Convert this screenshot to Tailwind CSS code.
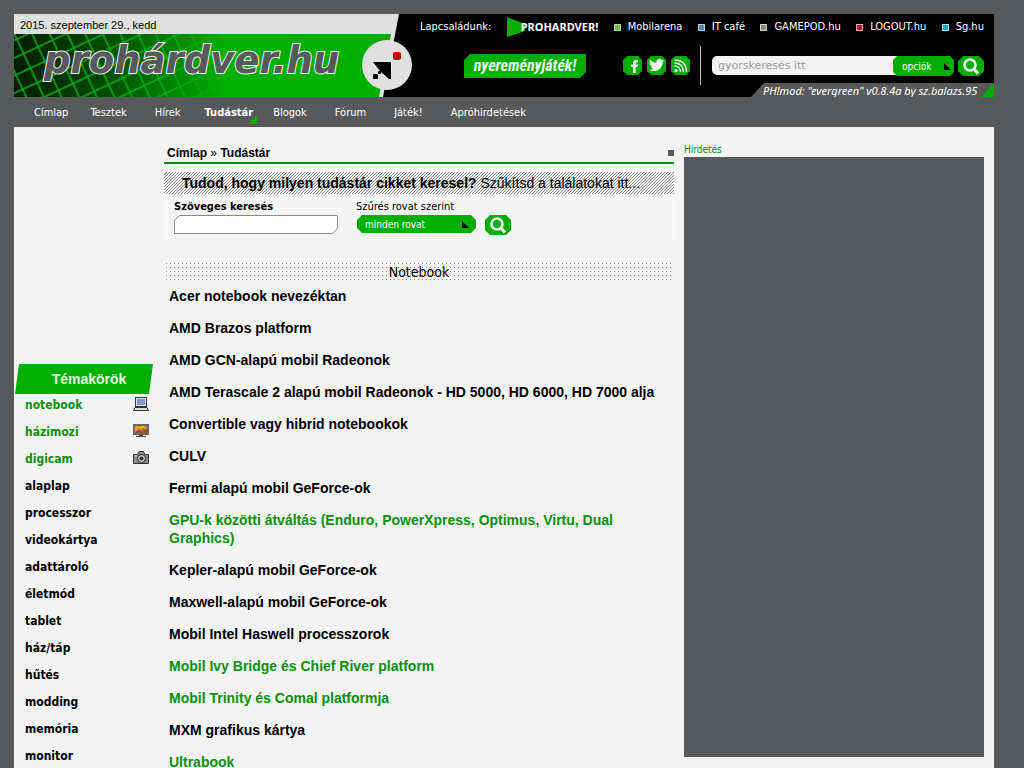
<!DOCTYPE html>
<html lang="hu">
<head>
<meta charset="utf-8">
<title>PROHARDVER! Tudástár</title>
<script src="https://cdn.jsdelivr.net/npm/@tailwindcss/browser@4"></script>
</head>
<body class="bg-[#58595b] pl-[14px] pr-[30px] pt-[14px] font-['DejaVu_Sans_Condensed','DejaVu_Sans',sans-serif] text-[11px] text-black">
<header class="relative flex h-[83px] bg-black text-white">
  <svg class="absolute left-0 top-0" width="400" height="83" viewBox="0 0 400 83" aria-hidden="true">
    <defs>
      <linearGradient id="g" x1="0" x2="1"><stop offset="0" stop-color="#001c00"/><stop offset=".25" stop-color="#004d00"/><stop offset=".56" stop-color="#00b000"/></linearGradient>
      <linearGradient id="f" x1="0" x2="1"><stop offset="0" stop-color="#fff"/><stop offset=".4" stop-color="#fff" stop-opacity=".9"/><stop offset=".55" stop-color="#fff" stop-opacity="0"/></linearGradient>
      <pattern id="p" width="16" height="16" patternUnits="userSpaceOnUse" patternTransform="rotate(-25)"><path d="M0 8H16M8 0V16" stroke="#0cb41c" stroke-width="1.500"/></pattern>
      <mask id="m"><rect width="400" height="83" fill="url(#f)"/></mask>
    </defs>
    <path d="M0 0H385L369 83H0Z" fill="#e0e0e0"/>
    <path d="M0 20H377L365 83H0Z" fill="url(#g)"/>
    <rect y="20" width="300" height="63" fill="url(#p)" mask="url(#m)"/>
    <circle cx="373" cy="51" r="25" fill="#e0e0e0"/>
    <rect x="379" y="38" width="8" height="8" rx="2" fill="#c8000c"/>
    <path d="M359 48H376Q377 48 377 49V65L375 65L366 57Z" fill="#000"/>
    <rect x="359" y="60" width="5" height="5" rx="1"/>
    <rect x="364" y="57" width="3" height="3" rx="1"/>
  </svg>
  <div class="relative w-[400px] shrink-0">
    <p class="pl-[6px] font-['Liberation_Sans',sans-serif] leading-[22px] text-black">2015. szeptember 29., kedd</p>
    <a href="#" aria-label="prohárdver.hu" class="block pl-[28px]"><svg width="305" height="48" viewBox="0 0 305 48"><text x="2" y="37" fill="#58595b" stroke="#f3f3f3" stroke-width="2" paint-order="stroke" class="font-['DejaVu_Sans',sans-serif] text-[37px] font-bold italic">prohárdver.hu</text></svg></a>
  </div>
  <div class="flex min-w-0 flex-1 flex-col">
    <div class="flex h-[26px] items-center justify-between pl-[6px] pr-[10px]">
      <span>Lapcsaládunk:</span>
      <a href="#" class="flex items-center font-['Noto_Sans',sans-serif] font-bold"><svg width="18" height="20" viewBox="0 0 18 20" class="-mr-1" aria-hidden="true"><path d="M0 0L18 7V14L0 20Z" fill="#00ae00"/></svg><span class="relative">PROHARDVER!</span></a>
      <a href="#" class="flex items-center gap-[7px]"><i class="size-[7px] border border-[#b8dca0] bg-[#78b848]"></i>Mobilarena</a>
      <a href="#" class="flex items-center gap-[7px]"><i class="size-[7px] border border-[#b4cfe0] bg-[#5588aa]"></i>IT café</a>
      <a href="#" class="flex items-center gap-[7px]"><i class="size-[7px] border border-[#d0d0c0] bg-[#8c8c78]"></i>GAMEPOD.hu</a>
      <a href="#" class="flex items-center gap-[7px]"><i class="size-[7px] border border-[#e0b0b0] bg-[#aa1c20]"></i>LOGOUT.hu</a>
      <a href="#" class="flex items-center gap-[7px]"><i class="size-[7px] border border-[#b0e0f0] bg-[#18a8d8]"></i>Sg.hu</a>
    </div>
    <div class="flex h-[43px] items-start justify-end pr-[10px] pt-[6px]">
      <a href="#" class="mr-[37px] mt-[8px] flex h-[24px] w-[122px] items-center justify-center whitespace-nowrap bg-[#00ae00] font-['Roboto_Condensed','Roboto',sans-serif] text-[16px] font-bold italic leading-[22px] text-[#f3f3f3] [clip-path:polygon(6px_0,100%_0,100%_18px,116px_100%,0_100%,0_6px)]">nyereményjáték!</a>
      <div class="mt-[10px] flex gap-[5px]">
        <a href="#" aria-label="Facebook"><svg width="19" height="19" viewBox="0 0 19 19"><path d="M4 0H15L19 4V15L15 19H4L0 15V4Z" fill="#00ae00"/><path d="M10 17V11H8V8.500H10V7Q10 4 13 4H15V6.500H13.500Q12.700 6.500 12.700 7.300V8.500H15L14.600 11H12.700V17Z" fill="#f3f3f3"/></svg></a>
        <a href="#" aria-label="Twitter"><svg width="19" height="19" viewBox="0 0 19 19"><path d="M4 0H15L19 4V15L15 19H4L0 15V4Z" fill="#00ae00"/><path transform="translate(2 1.500) scale(.63)" d="M23.950 4.570a10 10 0 0 1-2.820.77 4.960 4.960 0 0 0 2.160-2.720c-.95.550-2 .950-3.130 1.180a4.920 4.920 0 0 0-8.380 4.480C7.690 8.090 4.070 6.130 1.640 3.160a4.920 4.920 0 0 0 1.520 6.570 4.900 4.900 0 0 1-2.230-.61v.060a4.920 4.920 0 0 0 3.950 4.830 5 5 0 0 1-2.210.080 4.940 4.940 0 0 0 4.600 3.420A9.870 9.870 0 0 1 0 19.540a14 14 0 0 0 7.550 2.210c9.050 0 14-7.500 14-13.980 0-.210 0-.420-.020-.630a9.940 9.940 0 0 0 2.420-2.570z" fill="#f3f3f3"/></svg></a>
        <a href="#" aria-label="RSS"><svg width="19" height="19" viewBox="0 0 19 19"><path d="M4 0H15L19 4V15L15 19H4L0 15V4Z" fill="#00ae00"/><circle cx="5" cy="14.500" r="1.600" fill="#f3f3f3"/><path d="M3.500 10Q9 10 9.500 16M3.500 7Q12 7 12.500 16M3.500 4Q15 4 15.500 16" fill="none" stroke="#f3f3f3" stroke-width="1.300"/></svg></a>
      </div>
      <div class="ml-[10px] h-[39px] w-px bg-[#c0c0c0]"></div>
      <form class="ml-[11px] mt-[10px] flex">
        <input type="text" aria-label="Gyorskeresés" placeholder="gyorskeresés itt" class="h-[19px] w-[185px] rounded-l-[5px] bg-[#f3f3f3] pl-[6px] font-['DejaVu_Sans',sans-serif] text-[11px] text-black outline-none placeholder:text-[#999]">
        <button type="button" class="-ml-1 flex h-[20px] w-[61px] items-center justify-between bg-[#00ae00] pl-[9px] pr-[3px] text-[10px] text-white [clip-path:polygon(4px_0,57px_0,100%_4px,100%_16px,57px_100%,4px_100%,0_16px,0_4px)]">opciók<svg width="7" height="7" viewBox="0 0 7 7" aria-hidden="true"><path d="M0 0L7 7H0Z"/></svg></button>
        <button type="submit" aria-label="Keresés" class="ml-1"><svg width="26" height="20" viewBox="0 0 26 20"><path d="M5 0H21L26 5V15L21 20H5L0 15V5Z" fill="#00ae00"/><circle cx="12" cy="9" r="5.500" fill="none" stroke="#f3f3f3" stroke-width="2.600"/><path d="M15.500 12.500L20 17.500" stroke="#f3f3f3" stroke-width="3"/></svg></button>
      </form>
    </div>
    <div class="relative flex h-[14px] w-[243px] items-center self-end bg-[#58595b] pl-[12px] font-['Noto_Sans',sans-serif] italic leading-[14px] [clip-path:polygon(13px_0,100%_0,100%_100%,0_100%)]">
      <svg class="absolute bottom-0 right-0" width="13" height="14" viewBox="0 0 13 14" aria-hidden="true"><path d="M13 0V14H0Z" fill="#00ae00"/></svg>
      <span class="relative whitespace-nowrap pt-[2px]">PH!mod: "evergreen" v0.8.4a by sz.balazs.95</span>
    </div>
  </div>
</header>
<nav class="flex h-[30px] items-center gap-7 pl-[20px] pt-[2px] text-white">
  <a href="#" class="-mr-[6px]">Címlap</a>
  <a href="#">Tesztek</a>
  <a href="#">Hírek</a>
  <a href="#" class="relative -ml-1 -mr-2 flex h-full items-center font-bold">Tudástár<svg class="absolute -right-1 bottom-[3px]" width="9" height="9" viewBox="0 0 9 9" aria-hidden="true"><path d="M9 0V9H0Z" fill="#00ae00"/></svg></a>
  <a href="#">Blogok</a>
  <a href="#">Fórum</a>
  <a href="#">Játék!</a>
  <a href="#">Apróhirdetések</a>
</nav>
<div class="flex min-h-[641px] bg-[#f3f3f3] pr-[10px]">
  <aside class="w-[150px] shrink-0 pt-[237px]">
    <h2 class="ml-[1px] flex h-[30px] w-[138px] items-center justify-center bg-[#00ae00] pl-[10px] font-['Liberation_Sans',sans-serif] text-[14px] font-bold text-[#e8f3e8] [clip-path:polygon(4px_0,100%_0,134px_100%,0_100%)]">Témakörök</h2>
    <ul class="-mt-[2px] pl-[11px] pr-[15px] text-[12px] font-bold leading-[27px]">
      <li class="flex items-center justify-between text-[#0a8f0a]"><a href="#">notebook</a><svg class="-mt-1" width="16" height="16" viewBox="0 0 16 16" aria-hidden="true"><rect x="2.500" y="1.500" width="11" height="9" fill="#dde" stroke="#333"/><rect x="4" y="3" width="8" height="6" fill="#7d9cc0"/><path d="M2 11.500H14L15.500 14.500H.5Z" fill="#ddd" stroke="#333"/></svg></li>
      <li class="flex items-center justify-between text-[#0a8f0a]"><a href="#">házimozi</a><svg class="-mt-1" width="16" height="16" viewBox="0 0 16 16" aria-hidden="true"><rect y="1" width="16" height="11" fill="#666"/><rect x="2" y="3" width="12" height="7" fill="#f09a20"/><path d="M2 9L6 6L9 8L11 4L14 3V10H2Z" fill="#9a5a14"/><path d="M10 3L12 6L14 4" stroke="#ffd060" fill="none"/><path d="M6 12H10V13H13V14H3V13H6Z" fill="#444"/></svg></li>
      <li class="flex items-center justify-between text-[#0a8f0a]"><a href="#">digicam</a><svg class="-mt-1" width="16" height="16" viewBox="0 0 16 16" aria-hidden="true"><path d="M.5 4.500H4.500L6 1.500H10.500L12 4.500H15.500V13.500H.5Z" fill="#888" stroke="#333"/><circle cx="8.500" cy="8.500" r="4" fill="#ccc" stroke="#222"/><circle cx="8.500" cy="8.500" r="2" fill="#234"/><path d="M2 6H4" stroke="#eee"/></svg></li>
      <li><a href="#">alaplap</a></li>
      <li><a href="#">processzor</a></li>
      <li><a href="#">videokártya</a></li>
      <li><a href="#">adattároló</a></li>
      <li><a href="#">életmód</a></li>
      <li><a href="#">tablet</a></li>
      <li><a href="#">ház/táp</a></li>
      <li><a href="#">hűtés</a></li>
      <li><a href="#">modding</a></li>
      <li><a href="#">memória</a></li>
      <li><a href="#">monitor</a></li>
    </ul>
  </aside>
  <main class="min-w-0 flex-1 pt-[17px] font-['Liberation_Sans',sans-serif]">
    <div class="flex h-[20px] items-center justify-between border-b-2 border-[#0a8f0a] pl-[3px] text-[12px] font-bold">
      <p><a href="#">Címlap</a> <span class="font-normal">»</span> <a href="#">Tudástár</a></p>
      <i class="size-[6px] bg-[#58595b]"></i>
    </div>
    <h1 class="relative mt-2 pl-[18px] text-[14px] leading-[22px]">
      <svg class="absolute inset-0 h-full w-full" shape-rendering="crispEdges" aria-hidden="true"><defs><pattern id="h" width="3" height="3" patternUnits="userSpaceOnUse"><path d="M0 2H1V3H0ZM1 1H2V2H1ZM2 0H3V1H2Z" fill="#8a8a8a"/></pattern></defs><rect width="100%" height="100%" fill="url(#h)"/></svg>
      <span class="relative"><b>Tudod, hogy milyen tudástár cikket keresel?</b> Szűkítsd a találatokat itt...</span>
    </h1>
    <form class="flex h-[48px] items-start bg-[#f5f5f5] pl-[10px] pt-[5px] font-['DejaVu_Sans_Condensed','DejaVu_Sans',sans-serif]">
      <div class="w-[182px]">
        <label for="q" class="block font-bold leading-4">Szöveges keresés</label>
        <div class="relative h-[19px] w-[164px]">
          <svg class="absolute inset-0" width="164" height="19" viewBox="0 0 164 19" aria-hidden="true"><path d="M5.500 .5H163.500V13.500L158.500 18.500H.5V5.500Z" fill="#fff" stroke="#888"/></svg>
          <input id="q" type="text" class="relative h-full w-full bg-transparent px-2 outline-none">
        </div>
      </div>
      <div class="w-[129px]">
        <label for="r" class="block leading-4">Szűrés rovat szerint</label>
        <div class="relative ml-px h-[18px] w-[119px]">
          <select id="r" class="h-full w-full appearance-none bg-[#00ae00] pl-2 text-[10px] text-white [clip-path:polygon(5px_0,114px_0,100%_5px,100%_13px,114px_100%,5px_100%,0_13px,0_5px)]"><option>minden rovat</option></select>
          <svg class="pointer-events-none absolute right-[7px] top-[6px]" width="7" height="7" viewBox="0 0 7 7" aria-hidden="true"><path d="M0 0L7 7H0Z"/></svg>
        </div>
      </div>
      <button type="submit" aria-label="Szűrés" class="mt-4"><svg width="26" height="20" viewBox="0 0 26 20"><path d="M5 0H21L26 5V15L21 20H5L0 15V5Z" fill="#00ae00"/><circle cx="12" cy="9" r="5.500" fill="none" stroke="#f3f3f3" stroke-width="2.600"/><path d="M15.500 12.500L20 17.500" stroke="#f3f3f3" stroke-width="3"/></svg></button>
    </form>
    <h2 class="mx-[2px] mt-5 h-[19px] bg-[linear-gradient(90deg,#f3f3f3_3px,transparent_3px),linear-gradient(#f3f3f3_3px,#888_3px)] bg-[size:4px_4px] bg-[position:-3px_-2px] text-center font-['DejaVu_Sans_Condensed','DejaVu_Sans',sans-serif] text-[14px] leading-[20px]">Notebook</h2>
    <ul class="mt-[6px] flex flex-col gap-[14px] pl-[5px] text-[14px] font-bold leading-[18px]">
      <li><a href="#">Acer notebook nevezéktan</a></li>
      <li><a href="#">AMD Brazos platform</a></li>
      <li><a href="#">AMD GCN-alapú mobil Radeonok</a></li>
      <li><a href="#">AMD Terascale 2 alapú mobil Radeonok - HD 5000, HD 6000, HD 7000 alja</a></li>
      <li><a href="#">Convertible vagy hibrid notebookok</a></li>
      <li><a href="#">CULV</a></li>
      <li><a href="#">Fermi alapú mobil GeForce-ok</a></li>
      <li><a href="#" class="text-[#0a8f0a]">GPU-k közötti átváltás (Enduro, PowerXpress, Optimus, Virtu, Dual Graphics)</a></li>
      <li><a href="#">Kepler-alapú mobil GeForce-ok</a></li>
      <li><a href="#">Maxwell-alapú mobil GeForce-ok</a></li>
      <li><a href="#">Mobil Intel Haswell processzorok</a></li>
      <li><a href="#" class="text-[#0a8f0a]">Mobil Ivy Bridge és Chief River platform</a></li>
      <li><a href="#" class="text-[#0a8f0a]">Mobil Trinity és Comal platformja</a></li>
      <li><a href="#">MXM grafikus kártya</a></li>
      <li><a href="#" class="text-[#0a8f0a]">Ultrabook</a></li>
    </ul>
  </main>
  <aside class="ml-[10px] w-[300px] shrink-0 pt-[15px]">
    <p class="text-[10px] leading-[15px] text-[#0a8f0a]">Hirdetés</p>
    <div class="h-[600px] bg-[#58595b]"></div>
  </aside>
</div>
</body>
</html>
